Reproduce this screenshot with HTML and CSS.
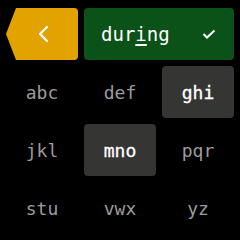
FILE: index.html
```html
<!DOCTYPE html>
<html lang="en">
<head>
    <meta charset="UTF-8">
    <title>Keypad</title>
    <link rel="stylesheet" href="styles.css">
</head>
<body>
    <div class="pad">
        <div class="back">
            <svg width="14" height="18" viewBox="0 0 14 18"><path d="M10 2 L3 9 L10 16" fill="none" stroke="#fff" stroke-width="2.2" stroke-linecap="round" stroke-linejoin="round"/></svg>
        </div>
        <div class="word">
            <span class="word-text">dur<u>i</u>ng</span>
            <svg class="check" width="14" height="10" viewBox="0 0 14 10"><path d="M1.5 5 L5 8.5 L12.5 1.5" fill="none" stroke="#fff" stroke-width="2"/></svg>
        </div>

        <div class="key">abc</div>
        <div class="key">def</div>
        <div class="key on">ghi</div>
        <div class="key">jkl</div>
        <div class="key on">mno</div>
        <div class="key">pqr</div>
        <div class="key">stu</div>
        <div class="key">vwx</div>
        <div class="key">yz</div>
    </div>
</body>
</html>
```

FILE: styles.css
```css
body {
    margin: 0;
    background-color: #000;
    font-family: "DejaVu Sans Mono", monospace;
}

.pad {
    display: grid;
    grid-template-columns: 72px 72px 72px;
    grid-auto-rows: 52px;
    gap: 6px;
    padding: 8px 6px 6px;
}

.back {
    display: flex;
    align-items: center;
    justify-content: center;
    padding-left: 4px;
    background-color: #e2a200;
    border-radius: 4px;
    clip-path: polygon(10px 0, 100% 0, 100% 100%, 10px 100%, 0 50%);
}

.word {
    grid-column: span 2;
    display: flex;
    align-items: center;
    justify-content: space-between;
    padding: 0 18px 0 17px;
    background-color: #0b5219;
    border-radius: 4px;
    color: #fff;
    font-size: 19px;
}

.word u {
    text-decoration-thickness: 2px;
    text-underline-offset: 3px;
}

.key {
    display: flex;
    align-items: center;
    justify-content: center;
    border-radius: 4px;
    color: #9c9c9c;
    font-size: 18px;
}

.key.on {
    background-color: #353633;
    color: #fff;
    -webkit-text-stroke: 0.3px #fff;
}
```
